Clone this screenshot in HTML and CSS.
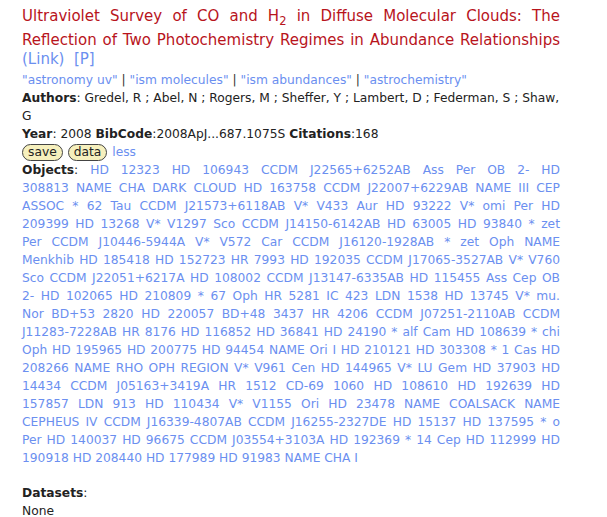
FILE: index.html
```html
<!DOCTYPE html>
<html>
<head>
<meta charset="utf-8">
<link rel="stylesheet" href="styles.css">
</head>
<body>
<div class="paper">
  <div class="title">
    <div class="tline">Ultraviolet Survey of CO and H<sub>2</sub> in Diffuse Molecular Clouds: The</div>
    <div class="tline">Reflection of Two Photochemistry Regimes in Abundance Relationships</div>
  </div>
  <div class="links"><a href="#">(Link)</a>&nbsp; <a href="#">[P]</a></div>
  <div class="keys"><a href="#">"astronomy uv"</a> | <a href="#">"ism molecules"</a> | <a href="#">"ism abundances"</a> | <a href="#">"astrochemistry"</a></div>
  <div class="line"><b>Authors</b>: Gredel, R ; Abel, N ; Rogers, M ; Sheffer, Y ; Lambert, D ; Federman, S ; Shaw, G</div>
  <div class="line"><b>Year</b>: 2008 <b>BibCode</b>:2008ApJ...687.1075S <b>Citations</b>:168</div>
  <div class="line btns"><span class="pill">save</span><span class="pill">data</span><a href="#">less</a></div>
  <div class="objects"><b>Objects</b>: <a href="#">HD 12323</a> <a href="#">HD 106943</a> <a href="#">CCDM J22565+6252AB</a> <a href="#">Ass Per OB 2-</a> <a href="#">HD<br>308813</a> <a href="#">NAME CHA DARK CLOUD</a> <a href="#">HD 163758</a> <a href="#">CCDM J22007+6229AB</a> <a href="#">NAME III CEP<br>ASSOC</a> <a href="#">* 62 Tau</a> <a href="#">CCDM J21573+6118AB</a> <a href="#">V* V433 Aur</a> <a href="#">HD 93222</a> <a href="#">V* omi Per</a> <a href="#">HD<br>209399</a> <a href="#">HD 13268</a> <a href="#">V* V1297 Sco</a> <a href="#">CCDM J14150-6142AB</a> <a href="#">HD 63005</a> <a href="#">HD 93840</a> <a href="#">* zet<br>Per</a> <a href="#">CCDM J10446-5944A</a> <a href="#">V* V572 Car</a> <a href="#">CCDM J16120-1928AB</a> <a href="#">* zet Oph</a> <a href="#">NAME<br>Menkhib</a> <a href="#">HD 185418</a> <a href="#">HD 152723</a> <a href="#">HR 7993</a> <a href="#">HD 192035</a> <a href="#">CCDM J17065-3527AB</a> <a href="#">V* V760<br>Sco</a> <a href="#">CCDM J22051+6217A</a> <a href="#">HD 108002</a> <a href="#">CCDM J13147-6335AB</a> <a href="#">HD 115455</a> <a href="#">Ass Cep OB<br>2-</a> <a href="#">HD 102065</a> <a href="#">HD 210809</a> <a href="#">* 67 Oph</a> <a href="#">HR 5281</a> <a href="#">IC 423</a> <a href="#">LDN 1538</a> <a href="#">HD 13745</a> <a href="#">V* mu.<br>Nor</a> <a href="#">BD+53 2820</a> <a href="#">HD 220057</a> <a href="#">BD+48 3437</a> <a href="#">HR 4206</a> <a href="#">CCDM J07251-2110AB</a> <a href="#">CCDM<br>J11283-7228AB</a> <a href="#">HR 8176</a> <a href="#">HD 116852</a> <a href="#">HD 36841</a> <a href="#">HD 24190</a> <a href="#">* alf Cam</a> <a href="#">HD 108639</a> <a href="#">* chi<br>Oph</a> <a href="#">HD 195965</a> <a href="#">HD 200775</a> <a href="#">HD 94454</a> <a href="#">NAME Ori I</a> <a href="#">HD 210121</a> <a href="#">HD 303308</a> <a href="#">* 1 Cas</a> <a href="#">HD<br>208266</a> <a href="#">NAME RHO OPH REGION</a> <a href="#">V* V961 Cen</a> <a href="#">HD 144965</a> <a href="#">V* LU Gem</a> <a href="#">HD 37903</a> <a href="#">HD<br>14434</a> <a href="#">CCDM J05163+3419A</a> <a href="#">HR 1512</a> <a href="#">CD-69 1060</a> <a href="#">HD 108610</a> <a href="#">HD 192639</a> <a href="#">HD<br>157857</a> <a href="#">LDN 913</a> <a href="#">HD 110434</a> <a href="#">V* V1155 Ori</a> <a href="#">HD 23478</a> <a href="#">NAME COALSACK</a> <a href="#">NAME<br>CEPHEUS IV</a> <a href="#">CCDM J16339-4807AB</a> <a href="#">CCDM J16255-2327DE</a> <a href="#">HD 15137</a> <a href="#">HD 137595</a> <a href="#">* o<br>Per</a> <a href="#">HD 140037</a> <a href="#">HD 96675</a> <a href="#">CCDM J03554+3103A</a> <a href="#">HD 192369</a> <a href="#">* 14 Cep</a> <a href="#">HD 112999</a> <a href="#">HD</a></div>
  <div class="objects-tail"><a href="#">190918</a> <a href="#">HD 208440</a> <a href="#">HD 177989</a> <a href="#">HD 91983</a> <a href="#">NAME CHA I</a></div>
  <div class="datasets"><b>Datasets</b>:</div>
  <div class="line">None</div>
</div>
</body>
</html>
```

FILE: styles.css
```css
html, body {
  margin: 0;
  padding: 0;
  background: #ffffff;
}

body {
  font-family: "DejaVu Sans", Verdana, sans-serif;
  font-size: 12.25px;
  color: #222222;
}

.paper {
  width: 538px;
  padding: 4px 0 0 22px;
}

a {
  color: #6b8ff0;
  text-decoration: none;
}

.title {
  font-size: 15px;
  line-height: 24px;
  color: #b8141c;
}

.tline {
  text-align: justify;
  text-align-last: justify;
  white-space: nowrap;
}

.title sub {
  font-size: 11.5px;
  line-height: 0;
  vertical-align: -4px;
}

.links {
  font-size: 15px;
  line-height: 14px;
}

.keys {
  line-height: 18px;
  margin-top: 5px;
  color: #333333;
}

.line {
  line-height: 18px;
}

.btns {
  display: flex;
  align-items: center;
  gap: 5px;
  height: 18px;
}

.pill {
  display: inline-block;
  background: #f6f0bd;
  border: 1px solid #444444;
  border-radius: 9px;
  padding: 0 5px;
  line-height: 15px;
  color: #222222;
}

.objects {
  line-height: 18px;
  text-align: justify;
  text-align-last: justify;
  white-space: nowrap;
}

.objects-tail {
  line-height: 18px;
  white-space: nowrap;
}

.datasets {
  margin-top: 17px;
  line-height: 18px;
}
```
